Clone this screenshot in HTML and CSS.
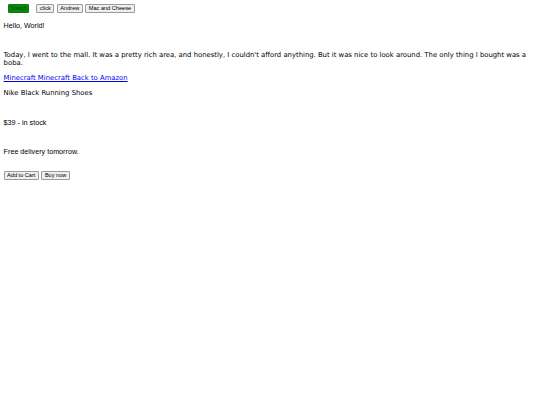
FILE: index.html
```html
<!DOCTYPE html>
<html>
<head>
<meta charset="utf-8">
<link rel="stylesheet" href="styles.css">
</head>
<body>
<div class="toolbar">
  <button class="btn btn-stretch">Stretch</button>
  <button class="btn">click</button>
  <button class="btn">Andrew</button>
  <button class="btn">Mac and Cheese</button>
</div>
<p class="hello">Hello, World!</p>
<p class="story">Today, I went to the mall. It was a pretty rich area, and honestly, I couldn't afford anything. But it was nice to look around. The only thing I bought was a boba.</p>
<p class="links"><a href="#">Minecraft Minecraft Back to Amazon</a></p>
<p class="product">Nike Black Running Shoes</p>
<p class="price">$39 - in stock</p>
<p class="delivery">Free delivery tomorrow.</p>
<div class="actions">
  <button class="btn">Add to Cart</button>
  <button class="btn">Buy now</button>
</div>
</body>
</html>
```
FILE: styles.css
```css
body {
  margin: 0;
  padding: 4px 3.6px;
  font-family: "Liberation Sans", Arial, sans-serif;
  font-size: 7.2px;
  color: #000;
  background: #fff;
}
.toolbar {
  display: flex;
  align-items: center;
  gap: 2.5px;
}
.btn {
  font-family: "Liberation Sans", Arial, sans-serif;
  font-size: 5.6px;
  line-height: 7px;
  padding: 0 2.5px;
  border: 1px solid #9a9a9a;
  border-radius: 1px;
  background: #efefef;
  color: #000;
  margin: 0;
}
.btn-stretch {
  background: #0a8a0a;
  border-color: #0a7a0a;
  color: #004400;
  font-size: 5.2px;
  padding: 0 1.5px;
  margin: 0 4.5px 0 4.4px;
}
p { margin: 0; }
.hello { margin-top: 8px; line-height: 9px; }
.story {
  margin-top: 21px;
  font-family: "DejaVu Sans", Verdana, sans-serif;
  font-size: 6.85px;
  line-height: 8px;
}
.links {
  margin-top: 7px;
  font-family: "DejaVu Sans", Verdana, sans-serif;
  font-size: 6.85px;
  line-height: 8px;
}
.links a { color: #0000ee; }
.product {
  margin-top: 7px;
  font-family: "DejaVu Sans", Verdana, sans-serif;
  font-size: 6.85px;
  line-height: 8px;
}
.price { margin-top: 22px; line-height: 8px; }
.delivery { margin-top: 21px; line-height: 8px; }
.actions {
  margin-top: 15px;
  display: flex;
  gap: 2.5px;
}
```
